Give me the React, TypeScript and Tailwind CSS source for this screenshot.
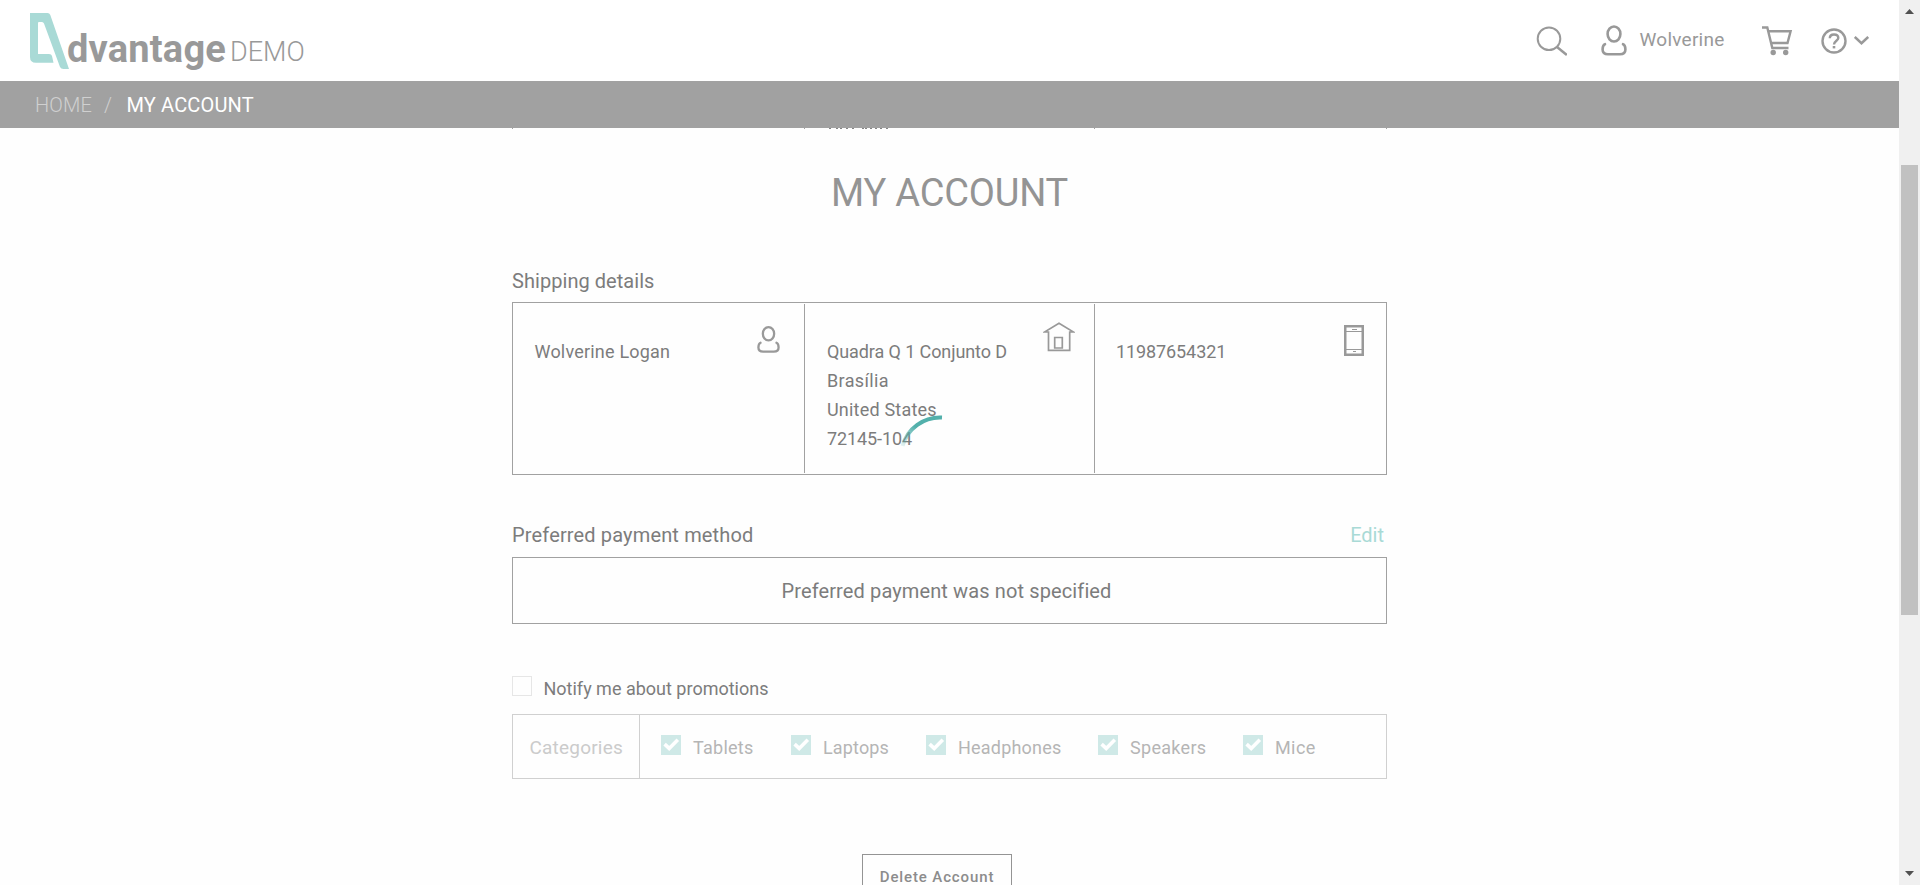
import type { ReactNode } from "react";

function Logo() {
  return (
    <svg className="mt-[13px] h-14 w-9 shrink-0 overflow-visible" viewBox="30 13 36 56" fill="#a9dad6">
      <path d="M30 13H47.5Q49.5 13 50.3 15L69 69H63.5Q61 69 60 67L44 23.5Q43.4 22 42 22H39Q38 22 38 23V54H49Q51.5 54 52 56L53.5 62.8H36Q30 62.8 30 57Z" />
    </svg>
  );
}

function PersonIcon({ className }: { className: string }) {
  return (
    <svg className={className} viewBox="0 0 26 31" fill="none" stroke="#999" strokeWidth="2.6" strokeLinecap="round">
      <ellipse cx="13" cy="9" rx="6.4" ry="7.5" />
      <path d="M4 19.2C1.8 20 1.6 22.5 1.6 24.5Q1.6 29.2 7 29.2H19Q24.4 29.2 24.4 24.5C24.4 22.5 24.2 20 22 19.2" />
    </svg>
  );
}

function Header() {
  return (
    <header className="flex h-[81px] items-start bg-white pl-[30px] text-[#999]">
      <Logo />
      <span className="ml-px mt-[29px] w-[162px] text-[38px] font-bold leading-10 tracking-[0.2px]">dvantage</span>
      <span className="ml-px mt-[37px] text-[27px] font-light leading-[30px]">DEMO</span>
      <div className="ml-auto flex items-start pr-[30px]">
        <svg className="mt-[26px] h-[30px] w-[31px]" viewBox="0 0 31 30" fill="none" stroke="#999" strokeWidth="2">
          <circle cx="13" cy="12.8" r="11.3" />
          <path d="M21 21 30.8 29" strokeWidth="2.4" />
        </svg>
        <PersonIcon className="ml-[34px] mt-[24.5px] h-[31px] w-[26px]" />
        <span className="ml-[12.5px] mt-[28px] w-[86.5px] text-[19px] leading-6 tracking-[0.25px]">Wolverine</span>
        <svg className="ml-[36px] mt-[25px] h-[31px] w-[31px]" viewBox="0 0 31 31" fill="none" stroke="#999" strokeWidth="2.4">
          <path d="M0 2.5H5.3L10.3 23H26.5M6.3 6.2H28.6L25.5 18H9.2" />
          <circle cx="11.2" cy="27.5" r="2.7" fill="#999" stroke="none" />
          <circle cx="23.7" cy="27.5" r="2.7" fill="#999" stroke="none" />
        </svg>
        <svg className="ml-[28px] mt-[28px] h-[26px] w-[26px]" viewBox="0 0 26 26" fill="none" stroke="#999" strokeWidth="2.4">
          <circle cx="13" cy="13" r="11.5" />
          <path d="M8.8 10.3C8.8 7.8 10.5 6.5 13 6.5S17.3 7.9 17.3 10C17.3 12.6 13 13 13 16.6" />
          <path d="M13 18V20.4" strokeWidth="2.6" />
        </svg>
        <svg className="ml-[7px] mt-[36px] h-[9px] w-[15px]" viewBox="0 0 15 9" fill="none" stroke="#999" strokeWidth="2.5">
          <path d="M.8 1 7.5 7.2 14.2 1" />
        </svg>
      </div>
    </header>
  );
}

function Category({ className, children }: { className: string; children: ReactNode }) {
  return (
    <div className={`flex shrink-0 items-start ${className}`}>
      <svg className="mt-5 h-5 w-5 shrink-0 bg-[#cfe9e7]" viewBox="0 0 20 20" fill="none" stroke="#fff" strokeWidth="3.6">
        <path d="M3.6 9.2 8.2 13.4 16.8 4.8" />
      </svg>
      <span className="ml-3 mt-[21px] leading-6">{children}</span>
    </div>
  );
}

function Scrollbar() {
  return (
    <div className="flex h-full w-[21px] shrink-0 flex-col items-center bg-[#f0f0f0]">
      <svg className="mt-[9px] h-[5px] w-[9px]" viewBox="0 0 9 5" fill="#505050"><path d="M0 5 4.5 0 9 5Z" /></svg>
      <div className="mt-[151px] h-[450px] w-[17px] bg-[#c1c1c1]" />
      <svg className="mb-[9px] mt-auto h-[5px] w-[9px]" viewBox="0 0 9 5" fill="#505050"><path d="M0 0 4.5 5 9 0Z" /></svg>
    </div>
  );
}

export default function App() {
  return (
    <div className="relative flex h-[885px] w-[1920px] overflow-hidden bg-[#fefefe] font-['Roboto',sans-serif]">
      <div className="flex min-w-0 flex-1 flex-col">
        <Header />
        <nav className="flex h-[47px] shrink-0 bg-[#a1a1a1] pl-[35px] pt-3 text-[20px] leading-6">
          <span className="w-[69px] font-light tracking-[0.2px] text-[#d0d0d0]">HOME</span>
          <span className="w-[22.5px] font-light text-[#d0d0d0]">/</span>
          <span className="tracking-[0.15px] text-white">MY ACCOUNT</span>
        </nav>

        <main className="mx-auto flex min-h-0 w-[875px] flex-1 flex-col text-[#7c7c7c]">
          <svg className="h-px w-full shrink-0" viewBox="0 0 875 1" shapeRendering="crispEdges">
            <path d="M0 .5h1M292 .5h1M582 .5h1M874 .5h1" stroke="#a1a1a1" />
            <path d="M317 .5h2M324 .5h2M328 .5h2M334 .5h2M340 .5h2M350 .5h2M353 .5h2M358 .5h2M363 .5h2M368 .5h2M374 .5h2" stroke="#858585" />
          </svg>
          <h1 className="mt-11 h-10 shrink-0 text-center text-[38px] leading-10 tracking-[-0.2px] text-[#949494]">MY ACCOUNT</h1>

          <h2 className="mt-14 h-6 shrink-0 text-[20px] leading-6 tracking-[0.05px]">Shipping details</h2>
          <section className="mt-[9px] flex h-[173px] shrink-0 border border-[#a1a1a1] py-px text-[18px] leading-[29px]">
            <div className="flex w-[291px] items-start justify-between pl-[21.5px] pr-[24px]">
              <span className="mt-[33px] tracking-[0.2px]">Wolverine Logan</span>
              <PersonIcon className="mt-[21px] h-[29px] w-[23px]" />
            </div>
            <div className="flex w-[291px] items-start justify-between border-x border-[#a1a1a1] pl-[22px] pr-[19px]">
              <div className="mt-[33px] flex flex-col whitespace-nowrap">
                <span className="tracking-[-0.1px]">Quadra Q 1 Conjunto D</span>
                <span className="tracking-[0.35px]">Brasília</span>
                <span className="tracking-[0.2px]">United States</span>
                <span className="tracking-[-0.1px]">72145-104</span>
              </div>
              <svg className="mt-[18px] h-[30px] w-8 shrink-0" viewBox="0 0 32 30" fill="none" stroke="#999" strokeWidth="1.7">
                <path d="M5.5 10H1.5L16 1.3 30.5 10H26.7V28.4H5.5Z" />
                <path d="M11.7 15.5H19.3V26H11.7Z" />
              </svg>
            </div>
            <div className="flex flex-1 items-start justify-between pl-[21px] pr-[22px]">
              <span className="mt-[33px] tracking-[-0.1px]">11987654321</span>
              <svg className="mt-[21px] h-[31px] w-5" viewBox="0 0 20 31" fill="none" stroke="#999">
                <rect x="1.25" y="1.25" width="17.5" height="28.5" strokeWidth="2.5" />
                <path d="M2 6.5H18M2 24.5H18M8 4.5H13M9 26.5H12" />
              </svg>
            </div>
          </section>

          <div className="mt-12 flex h-6 shrink-0 justify-between text-[20px] leading-6">
            <h2 className="tracking-[0.15px]">Preferred payment method</h2>
            <span className="mr-[3px] text-[#a9dad6]">Edit</span>
          </div>
          <section className="mt-[10px] h-[67px] shrink-0 border border-[#a1a1a1] pr-[6px] pt-[21px] text-center text-[20px] leading-6 tracking-[0.12px]">
            Preferred payment was not specified
          </section>

          <div className="mt-[52px] flex h-5 shrink-0">
            <span className="h-5 w-5 border border-[#e6e6e6]" />
            <span className="ml-[11.5px] mt-px text-[18px] leading-6">Notify me about promotions</span>
          </div>
          <section className="mt-[18px] flex h-[65px] shrink-0 border border-[#d0d0d0] text-[18px] text-[#b5b5b5]">
            <div className="w-[127px] shrink-0 border-r border-[#d0d0d0] pl-[16.5px] pt-[21px] text-[19px] leading-6 tracking-[0.2px] text-[#cbcbcb]">Categories</div>
            <Category className="ml-[21px] w-[130px] tracking-[0.25px]">Tablets</Category>
            <Category className="w-[135px] tracking-[0.15px]">Laptops</Category>
            <Category className="w-[172px] tracking-[0.2px]">Headphones</Category>
            <Category className="w-[145px] tracking-[0.3px]">Speakers</Category>
            <Category className="tracking-[0.4px]">Mice</Category>
          </section>

          <button className="ml-[350px] mt-[75px] h-12 w-[150px] shrink-0 self-start border border-[#949494] pb-[3px] text-[15px] font-medium leading-5 tracking-[0.88px] text-[#8c8c8c]">
            Delete Account
          </button>
        </main>
      </div>
      <Scrollbar />
      <svg className="absolute left-[898px] top-[412px] h-10 w-12" viewBox="898 412 48 40" fill="none">
        <defs>
          <linearGradient id="arc" gradientUnits="userSpaceOnUse" x1="903" y1="446" x2="914" y2="426">
            <stop offset="0" stopColor="#52b0ab" stopOpacity="0.15" />
            <stop offset="1" stopColor="#52b0ab" />
          </linearGradient>
        </defs>
        <path d="M902.5 446A39 39 0 0 1 942 417.5" stroke="url(#arc)" strokeWidth="4" />
      </svg>
    </div>
  );
}
